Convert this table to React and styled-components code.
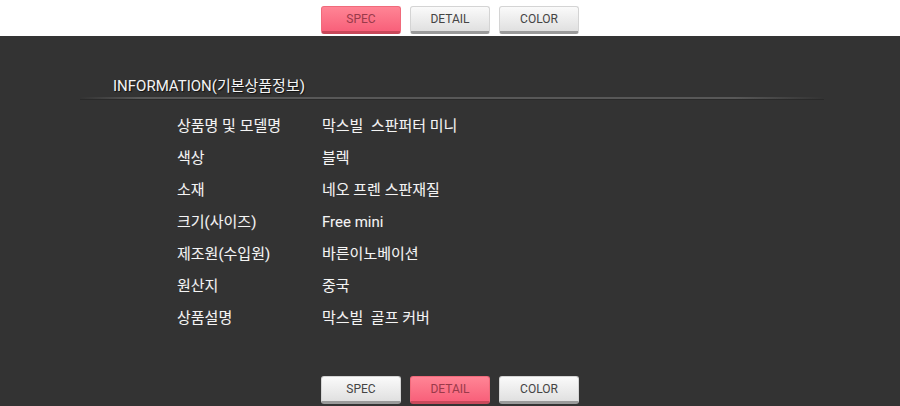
import { Fragment } from 'react';
import styled, { createGlobalStyle } from 'styled-components';

const GlobalStyle = createGlobalStyle`
  html, body {
    margin: 0;
    padding: 0;
    background: #ffffff;
  }
  body {
    font-family: Roboto, 'Noto Sans CJK KR', sans-serif;
  }
`;

const Page = styled.div`
  width: 900px;
  height: 406px;
  display: flex;
  flex-direction: column;
  overflow: hidden;
`;

const TabBar = styled.div`
  display: flex;
  justify-content: center;
  gap: 9px;
  height: 36px;
  padding-top: 6px;
  box-sizing: border-box;
  background: ${(p) => (p.$dark ? '#333333' : '#ffffff')};
`;

const TabButton = styled.button`
  width: 80px;
  height: 28px;
  padding: 0;
  border: 1px solid ${(p) => (p.$active ? '#f06a7b' : '#d4d4d4')};
  border-bottom: 3px solid ${(p) => (p.$active ? '#c9485a' : '#9a9a9a')};
  border-radius: 3px;
  background: ${(p) =>
    p.$active
      ? 'linear-gradient(to bottom, #ff8595, #f8607a)'
      : 'linear-gradient(to bottom, #fafafa, #e0e0e0)'};
  color: ${(p) => (p.$active ? '#9a3a4a' : '#444444')};
  font-family: Roboto, 'Liberation Sans', sans-serif;
  font-size: 12px;
  cursor: pointer;
`;

const Dark = styled.div`
  flex: 1;
  background: #333333;
  display: flex;
  flex-direction: column;
  color: #f4f4f4;
`;

const Heading = styled.div`
  padding: 40px 0 0 113px;
  height: 21px;
  font-size: 15px;
  line-height: 21px;
  text-shadow: 1px 1px 1px #111;
`;

const Divider = styled.div`
  margin: 0 76px 0 80px;
  height: 2px;
  background: linear-gradient(
    to right,
    rgba(90, 90, 90, 0),
    #585858 8%,
    #585858 88%,
    rgba(90, 90, 90, 0)
  );
  box-shadow: 0 1px 0 #2a2a2a;
`;

const Table = styled.div`
  padding: 11px 0 0 177px;
  display: grid;
  grid-template-columns: 145px auto;
  grid-auto-rows: 32px;
  font-size: 15px;
  line-height: 32px;
  flex: 1;
  align-content: start;
  text-shadow: 0 0 1px rgba(255, 255, 255, 0.15);
`;

const Cell = styled.div`
  white-space: pre;
`;

const tabs = ['SPEC', 'DETAIL', 'COLOR'];

const rows = [
  ['상품명 및 모델명', '막스빌  스판퍼터 미니'],
  ['색상', '블렉'],
  ['소재', '네오 프렌 스판재질'],
  ['크기(사이즈)', 'Free mini'],
  ['제조원(수입원)', '바른이노베이션'],
  ['원산지', '중국'],
  ['상품설명', '막스빌  골프 커버'],
];

function Tabs({ active, dark }) {
  return (
    <TabBar $dark={dark}>
      {tabs.map((t) => (
        <TabButton key={t} $active={t === active}>
          {t}
        </TabButton>
      ))}
    </TabBar>
  );
}

export default function App() {
  return (
    <Page>
      <GlobalStyle />
      <Tabs active="SPEC" />
      <Dark>
        <Heading>INFORMATION(기본상품정보)</Heading>
        <Divider />
        <Table>
          {rows.map(([l, v]) => (
            <Fragment key={l}>
              <Cell>{l}</Cell>
              <Cell>{v}</Cell>
            </Fragment>
          ))}
        </Table>
        <Tabs active="DETAIL" dark />
      </Dark>
    </Page>
  );
}
